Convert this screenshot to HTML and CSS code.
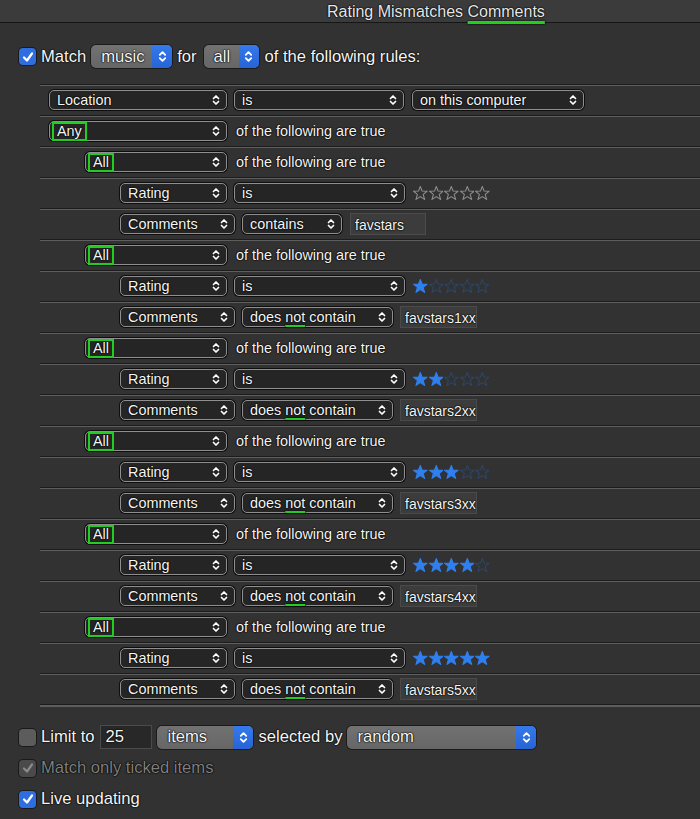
FILE: index.html
```html
<!DOCTYPE html>
<html>
<head>
<meta charset="utf-8">
<link rel="stylesheet" href="styles.css">
</head>
<body>
<svg class="defs" width="0" height="0" aria-hidden="true">
  <symbol id="star" viewBox="0 0 14 14"><polygon points="7,0.5 8.7,4.8 13.5,5 9.8,8 11.1,12.8 7,10.1 2.9,12.8 4.2,8 0.5,5 5.3,4.8"/></symbol>
  <symbol id="chev" viewBox="0 0 8 12"><path d="M1.5 4.5 L4 2 L6.5 4.5 M1.5 7.5 L4 10 L6.5 7.5"/></symbol>
  <symbol id="check" viewBox="0 0 16 16"><path d="M4 8.5 L7 11.5 L12 4.5"/></symbol>
</svg>

<header class="titlebar"><span class="title">Rating Mismatches <span class="hl">Comments</span></span></header>

<div class="match-row">
  <span class="checkbox checked"><svg><use href="#check"/></svg></span>
  <span class="label">Match</span>
  <span class="bpopup w-music"><span class="bp-text">music</span><span class="bp-arrow"><svg><use href="#chev"/></svg></span></span>
  <span class="label">for</span>
  <span class="bpopup w-all"><span class="bp-text">all</span><span class="bp-arrow"><svg><use href="#chev"/></svg></span></span>
  <span class="label">of the following rules:</span>
</div>

<div class="rules">
  <div class="rule l0">
    <span class="popup w178"><span>Location</span><svg class="chev"><use href="#chev"/></svg></span>
    <span class="popup w170"><span>is</span><svg class="chev"><use href="#chev"/></svg></span>
    <span class="popup w172 ml1"><span>on this computer</span><svg class="chev"><use href="#chev"/></svg></span>
  </div>
  <div class="rule l0">
    <span class="popup w178"><span class="mark">Any</span><svg class="chev"><use href="#chev"/></svg></span>
    <span class="rtext">of the following are true</span>
  </div>

  <div class="rule l1">
    <span class="popup w142"><span class="mark">All</span><svg class="chev"><use href="#chev"/></svg></span>
    <span class="rtext">of the following are true</span>
  </div>
  <div class="rule l2">
    <span class="popup w107"><span>Rating</span><svg class="chev"><use href="#chev"/></svg></span>
    <span class="popup w171"><span>is</span><svg class="chev"><use href="#chev"/></svg></span>
    <span class="stars s0"><svg><use href="#star"/></svg><svg><use href="#star"/></svg><svg><use href="#star"/></svg><svg><use href="#star"/></svg><svg><use href="#star"/></svg></span>
  </div>
  <div class="rule l2">
    <span class="popup w115"><span>Comments</span><svg class="chev"><use href="#chev"/></svg></span>
    <span class="popup w99"><span>contains</span><svg class="chev"><use href="#chev"/></svg></span>
    <span class="field w76 ml1">favstars</span>
  </div>

  <div class="rule l1">
    <span class="popup w142"><span class="mark">All</span><svg class="chev"><use href="#chev"/></svg></span>
    <span class="rtext">of the following are true</span>
  </div>
  <div class="rule l2">
    <span class="popup w107"><span>Rating</span><svg class="chev"><use href="#chev"/></svg></span>
    <span class="popup w171"><span>is</span><svg class="chev"><use href="#chev"/></svg></span>
    <span class="stars"><svg class="on"><use href="#star"/></svg><svg><use href="#star"/></svg><svg><use href="#star"/></svg><svg><use href="#star"/></svg><svg><use href="#star"/></svg></span>
  </div>
  <div class="rule l2">
    <span class="popup w115"><span>Comments</span><svg class="chev"><use href="#chev"/></svg></span>
    <span class="popup w151"><span>does <span class="ul">not</span> contain</span><svg class="chev"><use href="#chev"/></svg></span>
    <span class="field w77">favstars1xx</span>
  </div>

  <div class="rule l1">
    <span class="popup w142"><span class="mark">All</span><svg class="chev"><use href="#chev"/></svg></span>
    <span class="rtext">of the following are true</span>
  </div>
  <div class="rule l2">
    <span class="popup w107"><span>Rating</span><svg class="chev"><use href="#chev"/></svg></span>
    <span class="popup w171"><span>is</span><svg class="chev"><use href="#chev"/></svg></span>
    <span class="stars"><svg class="on"><use href="#star"/></svg><svg class="on"><use href="#star"/></svg><svg><use href="#star"/></svg><svg><use href="#star"/></svg><svg><use href="#star"/></svg></span>
  </div>
  <div class="rule l2">
    <span class="popup w115"><span>Comments</span><svg class="chev"><use href="#chev"/></svg></span>
    <span class="popup w151"><span>does <span class="ul">not</span> contain</span><svg class="chev"><use href="#chev"/></svg></span>
    <span class="field w77">favstars2xx</span>
  </div>

  <div class="rule l1">
    <span class="popup w142"><span class="mark">All</span><svg class="chev"><use href="#chev"/></svg></span>
    <span class="rtext">of the following are true</span>
  </div>
  <div class="rule l2">
    <span class="popup w107"><span>Rating</span><svg class="chev"><use href="#chev"/></svg></span>
    <span class="popup w171"><span>is</span><svg class="chev"><use href="#chev"/></svg></span>
    <span class="stars"><svg class="on"><use href="#star"/></svg><svg class="on"><use href="#star"/></svg><svg class="on"><use href="#star"/></svg><svg><use href="#star"/></svg><svg><use href="#star"/></svg></span>
  </div>
  <div class="rule l2">
    <span class="popup w115"><span>Comments</span><svg class="chev"><use href="#chev"/></svg></span>
    <span class="popup w151"><span>does <span class="ul">not</span> contain</span><svg class="chev"><use href="#chev"/></svg></span>
    <span class="field w77">favstars3xx</span>
  </div>

  <div class="rule l1">
    <span class="popup w142"><span class="mark">All</span><svg class="chev"><use href="#chev"/></svg></span>
    <span class="rtext">of the following are true</span>
  </div>
  <div class="rule l2">
    <span class="popup w107"><span>Rating</span><svg class="chev"><use href="#chev"/></svg></span>
    <span class="popup w171"><span>is</span><svg class="chev"><use href="#chev"/></svg></span>
    <span class="stars"><svg class="on"><use href="#star"/></svg><svg class="on"><use href="#star"/></svg><svg class="on"><use href="#star"/></svg><svg class="on"><use href="#star"/></svg><svg><use href="#star"/></svg></span>
  </div>
  <div class="rule l2">
    <span class="popup w115"><span>Comments</span><svg class="chev"><use href="#chev"/></svg></span>
    <span class="popup w151"><span>does <span class="ul">not</span> contain</span><svg class="chev"><use href="#chev"/></svg></span>
    <span class="field w77">favstars4xx</span>
  </div>

  <div class="rule l1">
    <span class="popup w142"><span class="mark">All</span><svg class="chev"><use href="#chev"/></svg></span>
    <span class="rtext">of the following are true</span>
  </div>
  <div class="rule l2">
    <span class="popup w107"><span>Rating</span><svg class="chev"><use href="#chev"/></svg></span>
    <span class="popup w171"><span>is</span><svg class="chev"><use href="#chev"/></svg></span>
    <span class="stars"><svg class="on"><use href="#star"/></svg><svg class="on"><use href="#star"/></svg><svg class="on"><use href="#star"/></svg><svg class="on"><use href="#star"/></svg><svg class="on"><use href="#star"/></svg></span>
  </div>
  <div class="rule l2">
    <span class="popup w115"><span>Comments</span><svg class="chev"><use href="#chev"/></svg></span>
    <span class="popup w151"><span>does <span class="ul">not</span> contain</span><svg class="chev"><use href="#chev"/></svg></span>
    <span class="field w77">favstars5xx</span>
  </div>
</div>

<div class="options">
  <div class="opt-row">
    <span class="checkbox"></span>
    <span class="label">Limit to</span>
    <span class="numfield">25</span>
    <span class="bpopup w-items"><span class="bp-text">items</span><span class="bp-arrow"><svg><use href="#chev"/></svg></span></span>
    <span class="label">selected by</span>
    <span class="bpopup w-random"><span class="bp-text">random</span><span class="bp-arrow"><svg><use href="#chev"/></svg></span></span>
  </div>
  <div class="opt-row disabled">
    <span class="checkbox dim"><svg><use href="#check"/></svg></span>
    <span class="label">Match only ticked items</span>
  </div>
  <div class="opt-row">
    <span class="checkbox checked"><svg><use href="#check"/></svg></span>
    <span class="label">Live updating</span>
  </div>
</div>
</body>
</html>
```

FILE: styles.css
```css
* { box-sizing: border-box; }
html, body { margin: 0; padding: 0; }
body {
  width: 700px;
  height: 819px;
  overflow: hidden;
  background: #323232;
  font-family: "Liberation Sans", Arial, sans-serif;
  color: #f6f6f6;
  text-shadow: 0 0 2px #000, 0 0 1px #000, 0 0 1px #000;
}
.defs { position: absolute; width: 0; height: 0; overflow: hidden; }

/* title bar */
.titlebar {
  height: 23px;
  background: #3b3b3b;
  border-bottom: 1px solid #161616;
  padding: 2px 0 0 327px;
  display: flex;
  align-items: center;
  font-size: 16px;
  color: #e8e8e8;
}
.hl {
  text-decoration: underline;
  text-decoration-color: #1fd01f;
  text-decoration-thickness: 3px;
  text-underline-offset: 4px;
  text-decoration-skip-ink: none;
}

/* top match row */
.match-row {
  display: flex;
  align-items: center;
  height: 23px;
  margin-top: 22px;
  padding-left: 19px;
  gap: 5px;
  font-size: 16.6px;
}
.label { white-space: nowrap; }

.checkbox {
  width: 17px;
  height: 17px;
  border-radius: 4px;
  background: #5c5c5c;
  box-shadow: 0 0 0 1px #1a1a1a;
  display: inline-flex;
  align-items: center;
  justify-content: center;
  flex: none;
}
.checkbox svg { width: 16px; height: 16px; fill: none; stroke: #fff; stroke-width: 2.2; stroke-linecap: round; stroke-linejoin: round; }
.checkbox.checked { background: #2f6ee0; }
.checkbox.dim { background: #4a4a4a; }
.checkbox.dim svg { stroke: #8a8a8a; }

/* blue-ended popups */
.bpopup {
  display: flex;
  height: 23px;
  border-radius: 5px;
  overflow: hidden;
  background: linear-gradient(#727272, #666666);
  box-shadow: 0 0 0 1px #1b1b1b;
  flex: none;
}
.bp-text { flex: 1; padding-left: 10px; display: flex; align-items: center; font-size: 16.6px; }
.bp-arrow {
  width: 20px;
  background: linear-gradient(#3579ea, #2764d6);
  display: flex;
  align-items: center;
  justify-content: center;
}
.bp-arrow svg { width: 9px; height: 13px; fill: none; stroke: #fff; stroke-width: 1.7; stroke-linecap: round; stroke-linejoin: round; }
.w-music { width: 81px; }
.w-all { width: 55px; margin-left: 2px; margin-right: 1px; }
.w-items { width: 96px; }
.w-random { width: 189px; }

/* rules list */
.rules {
  margin: 16px 0 0 40px;
  font-size: 14.4px;
}
.rules::after {
  content: "";
  display: block;
  height: 2px;
  border-top: 1px solid #1c1c1c;
  background: #5e5e5e;
}
.rule {
  height: 31px;
  border-top: 1px solid #1c1c1c;
  box-shadow: inset 0 1px 0 #5e5e5e;
  display: flex;
  align-items: center;
  gap: 7px;
}
.l0 { padding-left: 9px; }
.l1 { padding-left: 45px; }
.l2 { padding-left: 80px; }

.popup {
  height: 20px;
  border: 1.5px solid #8f8f8f;
  border-radius: 5px;
  background: #252525;
  box-shadow: 0 0 0 1px #0e0e0e;
  display: flex;
  align-items: center;
  justify-content: space-between;
  padding: 0 6px 0 7px;
  white-space: nowrap;
  flex: none;
}
.chev { width: 8px; height: 12px; fill: none; stroke: #fff; stroke-width: 1.7; stroke-linecap: round; stroke-linejoin: round; flex: none; }
.mark {
  border: 2px solid #22cc22;
  height: 19px;
  margin-left: -5px;
  padding: 0 3px 0 3px;
  display: flex;
  align-items: center;
}
.ul {
  text-decoration: underline;
  text-decoration-color: #22cc22;
  text-decoration-thickness: 2px;
  text-underline-offset: 3px;
  text-decoration-skip-ink: none;
}
.rtext { margin-left: 2px; white-space: nowrap; }
.ml1 { margin-left: 1px; }

.w178 { width: 178px; }
.w170 { width: 170px; }
.w172 { width: 172px; }
.w142 { width: 142px; }
.w107 { width: 107px; }
.w171 { width: 171px; }
.w115 { width: 115px; }
.w99 { width: 100px; }
.w151 { width: 151px; }
.w76 { width: 76px; }
.w77 { width: 77px; }

.field {
  height: 22px;
  background: #3c3c3c;
  border: 1px solid #4a4a4a;
  padding: 2px 0 0 4px;
  font-size: 14px;
  white-space: nowrap;
  overflow: hidden;
  display: flex;
  align-items: center;
  flex: none;
}

.stars { display: flex; gap: 1px; margin-left: 1px; }
.stars svg { width: 14.6px; height: 14.6px; fill: none; stroke: #2c4668; stroke-width: 1; }
.stars svg.on { fill: #2f7fee; stroke: #2f7fee; }
.stars.s0 svg { stroke: #8e8e8e; }

/* bottom options */
.options {
  margin-top: 18px;
  padding-left: 19px;
  display: flex;
  flex-direction: column;
  gap: 7px;
  font-size: 16.6px;
}
.opt-row { display: flex; align-items: center; gap: 5px; height: 24px; }
.opt-row.disabled .label { color: #7f7f7f; }
.numfield {
  width: 52px;
  height: 24px;
  margin-left: 1px;
  background: #282828;
  border: 1px solid #4b4b4b;
  padding-left: 4px;
  display: flex;
  align-items: center;
  font-size: 16.6px;
}
```
